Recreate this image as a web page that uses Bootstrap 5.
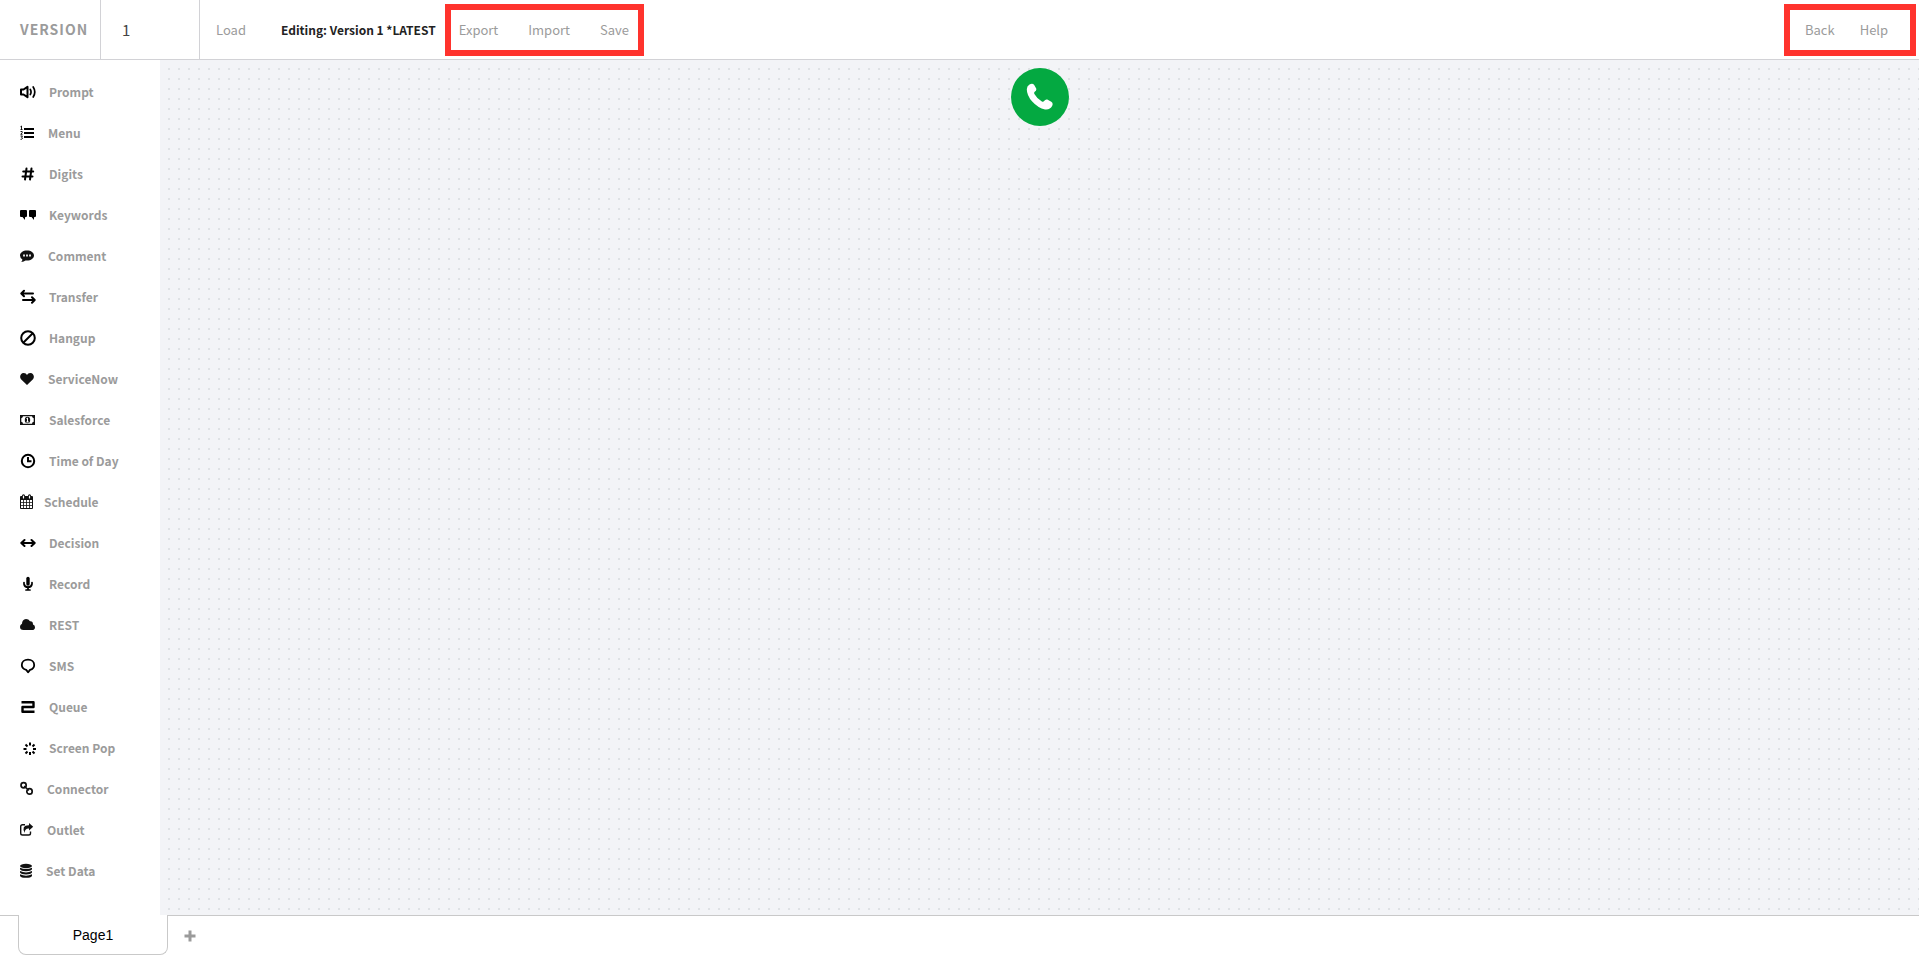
<!DOCTYPE html>
<html lang="en">
<head>
<meta charset="utf-8">
<meta name="viewport" content="width=device-width, initial-scale=1">
<title>Flow Editor</title>
<link href="https://cdn.jsdelivr.net/npm/bootstrap@5.3.0/dist/css/bootstrap.min.css" rel="stylesheet">
<style>
  body { font-family: "Noto Sans CJK SC", "Source Sans Pro", sans-serif; font-size: 12px; line-height: 20px; color: #222; background: #fff; }
  button, input { font-family: inherit; }
  .top-bar { height: 60px; border-bottom: 1px solid #d2d2d6; }
  .version-label { width: 101px; padding: 0 0 2px 20px; font-size: 14px; font-weight: 700; letter-spacing: 1px; color: #9b9b9b; border-right: 1px solid #d2d2d6; }
  .version-input { width: 99px; padding: 0 0 0 21px; font-size: 15px; color: #444; border: 0; border-right: 1px solid #d2d2d6; border-radius: 0; }
  .plain-btn { padding: 0; border: 0; background: none; color: #9b9b9b; font-size: 13px; line-height: 20px; text-decoration: none; white-space: nowrap; }
  .load-btn { margin-left: 16px; }
  .editing { margin-left: 35px; font-weight: 700; white-space: nowrap; }
  .marked { height: 52px; margin-top: 4px; border: 6px solid #ff332d; }
  .marked-main { width: 199px; margin-left: 9px; padding-left: 8px; gap: 30px; }
  .marked-side { width: 132px; margin-right: 3px; padding-left: 15px; gap: 25px; }
  .tool-list { width: 160px; padding: 11px 0 24px 20px; }
  .tool { display: flex; align-items: center; height: 41px; padding: 0; border: 0; background: none; color: #9b9b9b; font-weight: 700; text-align: left; }
  .tool svg { display: block; width: 16px; height: 16px; margin-right: 13px; color: #000; flex: none; }
  .tool.gap-menu svg { margin-right: 12px; }
  .tool.gap-link svg { margin-right: 11px; }
  .tool.gap-data svg { margin-right: 10px; }
  .tool.gap-date svg { margin-right: 8px; }
  .board { padding-top: 8px; background: #f3f4f7 url("data:image/svg+xml,%3Csvg xmlns='http://www.w3.org/2000/svg' width='10' height='10'%3E%3Cpath fill='%23dfe2e5' d='M8 8h2v2H8z'/%3E%3C/svg%3E"); }
  .call-node { width: 58px; height: 58px; padding: 0; border: 0; border-radius: 50%; background: #04a941; }
  .page-bar { height: 41px; }
  .edge { border-top: 1px solid #c9c9c9; }
  .edge-start { width: 18px; }
  .page-tab { width: 150px; height: 40px; padding: 0; border: 1px solid #c9c9c9; border-top: 0; border-radius: 0 0 8px 8px; background: #fff; color: #000; font-family: "Liberation Sans", Arial, sans-serif; font-size: 14px; }
  .add-page { margin-left: 16px; padding: 0; border: 0; background: none; }
</style>
</head>
<body class="d-flex flex-column min-vh-100">
<header class="top-bar d-flex">
  <label class="version-label d-flex align-items-center" for="version">VERSION</label>
  <input class="version-input" id="version" type="text" value="1">
  <div class="d-flex align-items-center">
    <button class="plain-btn load-btn" type="button">Load</button>
    <span class="editing">Editing: Version 1 *LATEST</span>
  </div>
  <div class="marked marked-main d-flex align-items-center">
    <button class="plain-btn" type="button">Export</button>
    <button class="plain-btn" type="button">Import</button>
    <button class="plain-btn" type="button">Save</button>
  </div>
  <nav class="marked marked-side d-flex align-items-center ms-auto">
    <a class="plain-btn" href="#">Back</a>
    <a class="plain-btn" href="#">Help</a>
  </nav>
</header>

<div class="d-flex flex-grow-1">
  <aside class="tool-list d-flex flex-column flex-shrink-0">
    <button class="tool" type="button"><svg viewBox="0 0 16 16" fill="none" stroke="currentColor" stroke-width="2"><path d="M1 5.500h2.500L7.500 2.800v10.400L3.500 10.500H1z" stroke-linejoin="round"/><path d="M10.300 5.500q1.500 2.500 0 5M13.200 3q3.200 5 0 10" stroke-linecap="round" stroke-width="1.700"/></svg>Prompt</button>
    <button class="tool gap-menu" type="button"><svg viewBox="0 0 16 16"><path d="M4 3h10v2H4zM4 7h10v2H4zM4 11h10v2H4z" fill="currentColor"/><path d="M.5 1.700l1-.7v3.500M.5 4.500h2M.5 6.500h1.700v1.200L.7 9.300h1.800M.5 11h2l-1 1.300q1 .2 1 1.100T.5 14.300" fill="none" stroke="currentColor" stroke-width=".9"/></svg>Menu</button>
    <button class="tool" type="button"><svg viewBox="0 0 16 16" fill="none" stroke="currentColor" stroke-width="2" stroke-linecap="round"><path d="M6.500 2.500l-1.500 11M11.500 2.500l-1.500 11M3.200 5.500h10M2.500 10.500h10"/></svg>Digits</button>
    <button class="tool" type="button"><svg viewBox="0 0 16 16" fill="currentColor"><path d="M1 3h5q1 0 1 1v5q0 1-1 1l-1 .2V13L2.500 10H1Q0 10 0 9V4q0-1 1-1zM10 3h5q1 0 1 1v5q0 1-1 1l-1 .2V13l-2.500-3H10q-1 0-1-1V4q0-1 1-1z"/></svg>Keywords</button>
    <button class="tool gap-menu" type="button"><svg viewBox="0 0 16 16"><path d="M7 2.500c4 0 7 2.100 7 5s-3 5-7 5l-1.500-.1Q4 13.800 1.200 14q1.300-1.300 1.200-2.600Q0 9.900 0 7.500c0-2.900 3-5 7-5z" fill="#111"/><path d="M3 6.500h2v2H3zM6 6.500h2v2H6zM9 6.500h2v2H9z" fill="#ddd"/></svg>Comment</button>
    <button class="tool" type="button"><svg viewBox="0 0 16 16" fill="none" stroke="currentColor" stroke-width="2" stroke-linecap="round" stroke-linejoin="round"><path d="M13 4.500H1.500M4 1.800L1.300 4.500 4 7.200M3 11h11.500M12 8.300l2.700 2.700-2.700 2.700"/></svg>Transfer</button>
    <button class="tool" type="button"><svg viewBox="0 0 16 16" fill="none" stroke="currentColor" stroke-width="2"><circle cx="8" cy="8" r="6.800"/><path d="M12.500 3.500l-9 9"/></svg>Hangup</button>
    <button class="tool gap-menu" type="button"><svg viewBox="0 0 16 16" fill="#111"><path d="M7 14L1 8.200C-.8 6.200.2 2 3.700 2 5.400 2 6.300 3 7 3.900 7.700 3 8.600 2 10.300 2c3.500 0 4.500 4.200 2.700 6.200z"/></svg>ServiceNow</button>
    <button class="tool" type="button"><svg viewBox="0 0 16 16"><path fill="#111" fill-rule="evenodd" d="M0 3h15v10H0zM3 4.300Q2.800 6 1.300 6.200v3.600Q2.800 10 3 11.700h9q.2-1.700 1.700-1.900V6.200Q12.200 6 12 4.300z"/><ellipse cx="7.500" cy="8" rx="2.700" ry="3.200" fill="#111"/><path d="M6.500 6.500l1-.5v4M6.300 10h2.500" fill="none" stroke="#fff"/></svg>Salesforce</button>
    <button class="tool" type="button"><svg viewBox="0 0 16 16" fill="none" stroke="currentColor" stroke-width="2"><circle cx="8" cy="8" r="6.200"/><path d="M8 4v4.200h3.500"/></svg>Time of Day</button>
    <button class="tool gap-date" type="button"><svg viewBox="0 0 16 16"><path d="M1 2h11q1 0 1 1v11q0 1-1 1H1q-1 0-1-1V3q0-1 1-1z" fill="#111"/><path d="M1 6h2.200v2.200H1zM4 6h2.200v2.200H4zM7 6h2.200v2.200H7zM10 6h2v2.200h-2zM1 9h2.200v2.200H1zM4 9h2.200v2.200H4zM7 9h2.200v2.200H7zM10 9h2v2.200h-2zM1 12h2.200v2H1zM4 12h2.200v2H4zM7 12h2.200v2H7zM10 12h2v2h-2z" fill="#fff"/><path d="M3.500 1.800v2M9.500 1.800v2" stroke="#111" stroke-width="3" stroke-linecap="round"/><path d="M3.500 2v2M9.500 2v2" stroke="#fff" stroke-width="1.200" stroke-linecap="round"/></svg>Schedule</button>
    <button class="tool" type="button"><svg viewBox="0 0 16 16" fill="none" stroke="currentColor" stroke-width="2" stroke-linecap="round" stroke-linejoin="round"><path d="M2 8h12M4.500 5L1.300 8l3.200 3M11.500 5l3.200 3-3.200 3"/></svg>Decision</button>
    <button class="tool" type="button"><svg viewBox="0 0 16 16" fill="none" stroke="currentColor" stroke-linecap="round"><path d="M8 2.500v5.500" stroke-width="3.400"/><path d="M4 6.500v1.500q.5 3.200 4 3.200T12 8V6.500M8 11v3M6 14h4" stroke-width="1.700"/></svg>Record</button>
    <button class="tool" type="button"><svg viewBox="0 0 16 16" fill="#111"><path d="M3.500 13Q0 13 0 9.800 0 7.800 2 6.800 2 2.500 6 2q2.600 0 4 2.300 3-.3 3 3.200 2 .7 2 2.700 0 2.800-3 2.800z"/></svg>REST</button>
    <button class="tool" type="button"><svg viewBox="0 0 16 16" fill="none" stroke="currentColor" stroke-width="1.800" stroke-linejoin="round"><path d="M8 1.700c3.700 0 6.200 2.200 6.200 5.200 0 2.500-1.700 4.200-4.200 5l-1.800 2.400-2-2.400C3.500 11 1.800 9.400 1.800 6.900c0-3 2.500-5.200 6.200-5.200z"/></svg>SMS</button>
    <button class="tool" type="button"><svg viewBox="0 0 16 16" fill="none" stroke="currentColor" stroke-width="2.400" stroke-linejoin="round"><path d="M1.500 3.200h12v4.800H2.500v4.800h12"/></svg>Queue</button>
    <button class="tool" type="button"><svg viewBox="0 0 16 16" fill="none" stroke="currentColor" stroke-width="2"><path d="M10 2.500v3M10 12v3M3.500 9h3M13 9h3M5.500 4.500l2 2M14.500 4.500l-2 2M5.500 13.500l2-2M14.500 13.500l-2-2"/></svg>Screen Pop</button>
    <button class="tool gap-link" type="button"><svg viewBox="0 0 16 16" fill="none" stroke="#111" stroke-width="1.700"><circle cx="3.600" cy="4.200" r="2.600"/><circle cx="9.500" cy="10.400" r="2.700"/><path d="M4.200 5l4.600 4.500"/></svg>Connector</button>
    <button class="tool gap-link" type="button"><svg viewBox="0 0 16 16"><path d="M5 2.800H2.500Q.7 2.800.7 4.600v6.600Q.7 13 2.500 13h6.200q1.800 0 1.800-1.800V9.500" fill="none" stroke="#111" stroke-width="1.400"/><path d="M9 1l4.200 3.800L9 8.500v-2Q4.500 6.300 4.800 11 .8 3 9 3.200z" fill="#111"/></svg>Outlet</button>
    <button class="tool gap-data" type="button"><svg viewBox="0 0 16 16" fill="#111"><ellipse cx="6" cy="3" rx="6" ry="2.200"/><path d="M0 4.700q6 2.800 12 0v1.600q-1 1.900-6 1.900T0 6.300zM0 8q6 2.800 12 0v1.600q-1 1.900-6 1.900T0 9.600zM0 11.300q6 2.800 12 0v1.600q-1 1.900-6 1.900t-6-1.900z"/></svg>Set Data</button>
  </aside>
  <main class="board flex-grow-1 d-flex justify-content-center align-items-start">
    <button class="call-node" type="button" aria-label="Incoming call"><svg class="d-block mx-auto" width="28" height="28" viewBox="0 0 28 28"><path d="M3.500 1.500Q6.500-.2 8.200 2l2 3.600q.6 1.800-1.500 3.200-.9.900-.3 2.200 2.800 5 7.500 7.500 1.500.6 2.200-.4 1.200-2 3.200-1.500l4 2.200q2.200 1.500.8 4.200-2 4-7.100 3.400Q12 25 6.200 18.500.8 12.500.8 6.200q0-3.200 2.700-4.700z" fill="#fff"/></svg></button>
  </main>
</div>

<footer class="page-bar d-flex">
  <div class="edge edge-start"></div>
  <button class="page-tab" type="button">Page1</button>
  <div class="edge flex-grow-1 d-flex align-items-center">
    <button class="add-page" type="button" aria-label="Add page"><svg class="d-block" width="12" height="12" viewBox="0 0 12 12"><path d="M6 .5v11M.5 6h11" stroke="#9b9b9b" stroke-width="3"/></svg></button>
  </div>
</footer>
<script src="https://cdn.jsdelivr.net/npm/bootstrap@5.3.0/dist/js/bootstrap.bundle.min.js"></script>
</body>
</html>
